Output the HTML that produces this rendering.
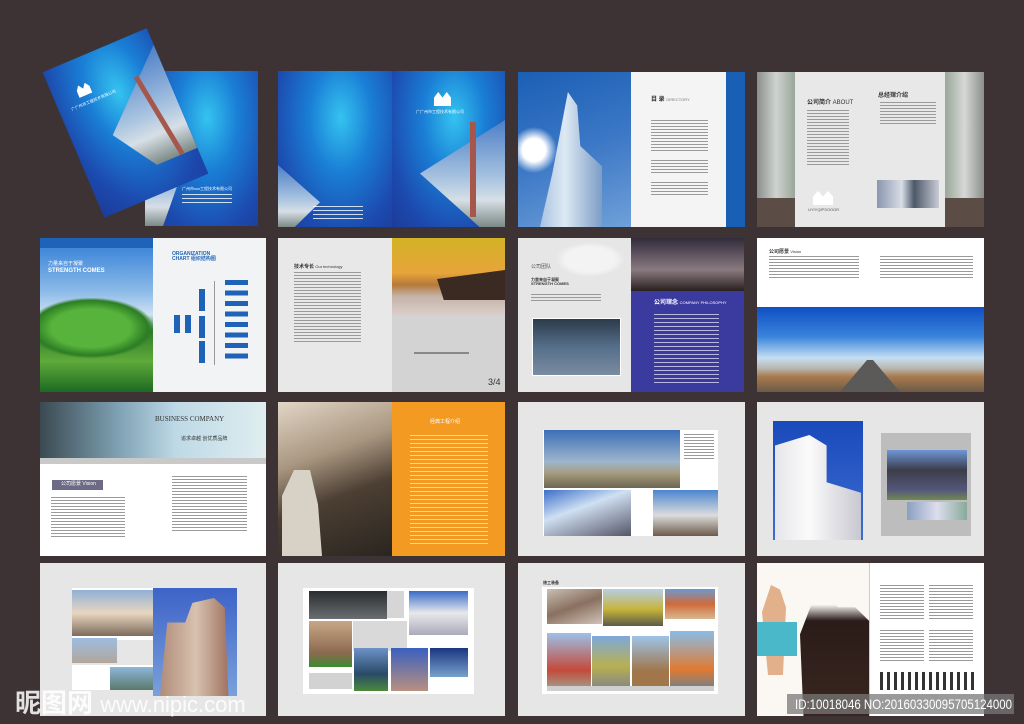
<!DOCTYPE html>
<html><head><meta charset="utf-8"><style>
*{margin:0;padding:0;box-sizing:border-box}
body{width:1024px;height:724px;background:#3d3334;position:relative;overflow:hidden;font-family:"Liberation Sans","Noto Sans CJK SC",sans-serif}
.a{position:absolute;overflow:hidden}
.blue{background:radial-gradient(ellipse at 55% 30%,#35c3f0 0%,#1a7fd6 35%,#1c4aae 75%,#1d3b9a 100%)}
.sky{background:linear-gradient(180deg,#4d7fc7 0%,#a9c4e0 55%,#d7dfe6 75%,#7c8a86 100%)}
.txt{background:repeating-linear-gradient(180deg,#9a9a9a 0 1px,transparent 1px 3px)}
.txtw{background:repeating-linear-gradient(180deg,rgba(255,255,255,.8) 0 1px,transparent 1px 4px)}
.t{position:absolute;white-space:nowrap;line-height:1}
</style></head><body>

<!-- ROW 1 A: cover -->
<div class="a blue" style="left:145px;top:71px;width:113px;height:155px"></div>
<div class="a sky" style="left:145px;top:150px;width:45px;height:76px;clip-path:polygon(0 10%,100% 0,40% 100%,0 100%)"></div>
<div class="t" style="left:182px;top:187px;font-size:4px;color:#fff">广州市xxx工程技术有限公司</div>
<div class="a txtw" style="left:182px;top:194px;width:50px;height:12px"></div>
<div class="a blue" style="left:69px;top:44px;width:113px;height:158px;transform:rotate(-23deg);overflow:hidden">
  <div class="a sky" style="left:40px;top:18px;width:73px;height:112px;clip-path:polygon(100% 0,100% 100%,40% 100%,0 60%);border:0"></div>
  <div class="a" style="left:88px;top:40px;width:5px;height:90px;background:#a4574a;transform:rotate(-8deg)"></div>
  <div class="a" style="left:24px;top:26px;width:14px;height:12px;background:#fff;clip-path:polygon(0 40%,25% 0,50% 40%,75% 0,100% 40%,100% 100%,0 100%)"></div>
  <div class="t" style="left:12px;top:44px;font-size:4px;color:#fff">广广州市工程技术有限公司</div>
</div>

<!-- ROW1 B -->
<div class="a blue" style="left:278px;top:71px;width:114px;height:156px"></div>
<div class="a sky" style="left:278px;top:165px;width:42px;height:62px;clip-path:polygon(0 0,100% 60%,40% 100%,0 100%)"></div>
<div class="a txtw" style="left:313px;top:206px;width:50px;height:13px"></div>
<div class="a blue" style="left:392px;top:71px;width:113px;height:156px"></div>
<div class="a sky" style="left:420px;top:120px;width:85px;height:107px;clip-path:polygon(100% 0,100% 100%,70% 100%,0 50%)"></div>
<div class="a" style="left:470px;top:122px;width:6px;height:95px;background:#a4574a"></div>
<div class="a" style="left:434px;top:92px;width:17px;height:14px;background:#fff;clip-path:polygon(0 40%,25% 0,50% 40%,75% 0,100% 40%,100% 100%,0 100%)"></div>
<div class="t" style="left:416px;top:110px;font-size:4px;color:#fff">广广州市工程技术有限公司</div>

<!-- ROW1 C -->
<div class="a" style="left:518px;top:72px;width:113px;height:155px;background:linear-gradient(160deg,#1b5fb4,#3b77c6 50%,#6fa0d8)"></div>
<div class="a" style="left:518px;top:120px;width:40px;height:60px;background:radial-gradient(circle at 40% 50%,#fff 0 30%,transparent 60%)"></div>
<div class="a" style="left:540px;top:92px;width:62px;height:135px;background:linear-gradient(90deg,#a9c3e0,#dde9f4 40%,#7d9dc5);clip-path:polygon(45% 0,60% 10%,65% 40%,100% 55%,100% 100%,0 100%,20% 60%)"></div>
<div class="a" style="left:631px;top:72px;width:95px;height:155px;background:#f4f4f4"></div>
<div class="a" style="left:726px;top:72px;width:19px;height:155px;background:#1a5fb6"></div>
<div class="t" style="left:651px;top:97px;font-size:6px;color:#333;font-weight:bold">目 录 <span style="font-weight:normal;font-size:4px;color:#777">DIRECTORY</span></div>
<div class="a txt" style="left:651px;top:120px;width:57px;height:32px"></div>
<div class="a txt" style="left:651px;top:160px;width:57px;height:14px"></div>
<div class="a txt" style="left:651px;top:182px;width:57px;height:14px"></div>

<!-- ROW1 D -->
<div class="a" style="left:757px;top:72px;width:227px;height:155px;background:#e8e8e8"></div>
<div class="a" style="left:757px;top:72px;width:38px;height:155px;background:linear-gradient(90deg,#8a8f8c,#cfd3d0 50%,#9aa79a)"></div>
<div class="a" style="left:945px;top:72px;width:39px;height:155px;background:linear-gradient(270deg,#8a8f8c,#d6d8d6 50%,#9aa79a)"></div>
<div class="a" style="left:757px;top:198px;width:38px;height:29px;background:#5b4d45"></div>
<div class="a" style="left:945px;top:198px;width:39px;height:29px;background:#5b4d45"></div>
<div class="t" style="left:807px;top:100px;font-size:6px;color:#333;font-weight:bold">公司简介 <span style="font-weight:normal">ABOUT</span></div>
<div class="a txt" style="left:807px;top:110px;width:42px;height:56px"></div>
<div class="a" style="left:813px;top:191px;width:20px;height:14px;background:#fff;clip-path:polygon(0 40%,25% 0,50% 40%,75% 0,100% 40%,100% 100%,0 100%)"></div>
<div class="t" style="left:808px;top:208px;font-size:4px;color:#555">UYIYQIPSOOGR</div>
<div class="t" style="left:878px;top:93px;font-size:6px;color:#333;font-weight:bold">总经理介绍</div>
<div class="a txt" style="left:880px;top:102px;width:56px;height:22px"></div>
<div class="a" style="left:877px;top:180px;width:62px;height:28px;background:linear-gradient(90deg,#8b96ad,#d8dde6 40%,#4c5868 60%,#c9ccd6)"></div>

<!-- ROW2 A -->
<div class="a" style="left:40px;top:238px;width:113px;height:154px;background:linear-gradient(180deg,#2d7bd6 0%,#8dbbe8 35%,#cfe2f2 50%,#2e7a2a 60%,#5faa3a 80%,#1c6a22 100%)"></div>
<div class="a" style="left:40px;top:298px;width:113px;height:60px;background:radial-gradient(ellipse at 45% 50%,#57b33b 0 45%,#2c7d24 65%,transparent 72%)"></div>
<div class="a" style="left:40px;top:238px;width:113px;height:10px;background:#1f63b8"></div>
<div class="t" style="left:48px;top:262px;font-size:5px;color:#fff">力量来自于凝聚</div>
<div class="t" style="left:48px;top:268px;font-size:6px;color:#fff;font-weight:bold">STRENGTH COMES</div>
<div class="a" style="left:153px;top:238px;width:113px;height:154px;background:#f2f3f5"></div>
<div class="t" style="left:172px;top:252px;font-size:5px;color:#1f63b8;font-weight:bold">ORGANIZATION<br>CHART 组织结构图</div>
<div class="a" style="left:174px;top:315px;width:6px;height:18px;background:#1f63b8"></div>
<div class="a" style="left:185px;top:315px;width:6px;height:18px;background:#1f63b8"></div>
<div class="a" style="left:199px;top:289px;width:6px;height:22px;background:#1f63b8"></div>
<div class="a" style="left:199px;top:316px;width:6px;height:22px;background:#1f63b8"></div>
<div class="a" style="left:199px;top:341px;width:6px;height:22px;background:#1f63b8"></div>
<div class="a" style="left:214px;top:281px;width:1px;height:84px;background:#999"></div>
<div class="a" style="left:225px;top:280px;width:23px;height:84px;background:repeating-linear-gradient(180deg,#1f63b8 0 5px,transparent 5px 10.5px)"></div>

<!-- ROW2 B -->
<div class="a" style="left:278px;top:238px;width:114px;height:154px;background:#e8e8e8"></div>
<div class="t" style="left:294px;top:265px;font-size:5px;color:#333;font-weight:bold">技术专长 <span style="font-weight:normal;font-size:4px">Our technology</span></div>
<div class="a txt" style="left:294px;top:272px;width:67px;height:72px"></div>
<div class="a" style="left:392px;top:238px;width:113px;height:78px;background:linear-gradient(180deg,#d3b326 0%,#e7a43a 45%,#b57a3a 60%,#c4b3a8 75%,#dcd0cc 100%)"></div>
<div class="a" style="left:437px;top:270px;width:68px;height:30px;background:#3a2a22;clip-path:polygon(0 30%,100% 0,100% 100%,10% 100%)"></div>
<div class="a" style="left:392px;top:316px;width:113px;height:76px;background:#d3d3d3"></div>
<div class="a" style="left:414px;top:352px;width:55px;height:2px;background:#888"></div>
<div class="t" style="left:488px;top:378px;font-size:9px;color:#333">3/4</div>

<!-- ROW2 C -->
<div class="a" style="left:518px;top:238px;width:113px;height:154px;background:#e6e6e6"></div>
<div class="a" style="left:555px;top:242px;width:70px;height:35px;background:radial-gradient(ellipse,#f3f3f3 0 50%,transparent 70%)"></div>
<div class="t" style="left:531px;top:265px;font-size:5px;color:#555">公司团队</div>
<div class="t" style="left:531px;top:278px;font-size:4px;color:#333;font-weight:bold">力量来自于凝聚<br>STRENGTH COMES</div>
<div class="a txt" style="left:531px;top:294px;width:70px;height:9px"></div>
<div class="a" style="left:532px;top:318px;width:89px;height:58px;background:linear-gradient(180deg,#2c3b4a,#556f8b 50%,#7a8ca0);border:1px solid #fff"></div>
<div class="a" style="left:631px;top:238px;width:113px;height:53px;background:linear-gradient(180deg,#312b3b,#8a7a80 60%,#2a2020)"></div>
<div class="a" style="left:631px;top:291px;width:113px;height:101px;background:#3b3a9e"></div>
<div class="t" style="left:654px;top:300px;font-size:6px;color:#fff;font-weight:bold">公司理念 <span style="font-weight:normal;font-size:4px">COMPANY PHILOSOPHY</span></div>
<div class="a txtw" style="left:654px;top:314px;width:65px;height:72px;opacity:.8"></div>

<!-- ROW2 D -->
<div class="a" style="left:757px;top:238px;width:227px;height:69px;background:#fff"></div>
<div class="t" style="left:769px;top:250px;font-size:5px;color:#333;font-weight:bold">公司愿景 <span style="font-weight:normal;font-size:4px">Vision</span></div>
<div class="a txt" style="left:769px;top:256px;width:90px;height:24px"></div>
<div class="a txt" style="left:880px;top:256px;width:93px;height:24px"></div>
<div class="a" style="left:757px;top:307px;width:227px;height:85px;background:linear-gradient(180deg,#0f4fc4 0%,#3a84dc 35%,#c6def2 60%,#b8b7b0 72%,#a87a4e 82%,#6b5a48 100%)"></div>
<div class="a" style="left:840px;top:360px;width:60px;height:32px;background:#5b5a58;clip-path:polygon(45% 0,55% 0,100% 100%,0 100%)"></div>

<!-- ROW3 A -->
<div class="a" style="left:40px;top:402px;width:226px;height:154px;background:#fff"></div>
<div class="a" style="left:40px;top:402px;width:226px;height:56px;background:linear-gradient(90deg,#3a4a52,#7fa2b4 35%,#bed9e6 60%,#dfeef0)"></div>
<div class="a" style="left:40px;top:458px;width:226px;height:6px;background:#c9c9c9"></div>
<div class="t" style="left:155px;top:416px;font-size:7px;color:#333;font-family:'Liberation Serif',serif">BUSINESS COMPANY</div>
<div class="t" style="left:181px;top:437px;font-size:5px;color:#333">追求卓越 创优质品牌</div>
<div class="a" style="left:52px;top:480px;width:51px;height:10px;background:#6c6a84"></div>
<div class="t" style="left:61px;top:482px;font-size:5px;color:#fff">公司愿景 Vision</div>
<div class="a txt" style="left:51px;top:497px;width:74px;height:40px"></div>
<div class="a txt" style="left:172px;top:476px;width:75px;height:55px"></div>

<!-- ROW3 B -->
<div class="a" style="left:278px;top:402px;width:114px;height:154px;background:linear-gradient(160deg,#e2d6c6 0%,#a89680 35%,#4c3f33 60%,#2a2520 100%)"></div>
<div class="a" style="left:282px;top:470px;width:40px;height:86px;background:#d8d2c6;clip-path:polygon(30% 0,70% 0,90% 40%,100% 100%,0 100%,0 30%)"></div>
<div class="a" style="left:392px;top:402px;width:113px;height:154px;background:#f39a23"></div>
<div class="t" style="left:430px;top:420px;font-size:5px;color:#fff">经典工程介绍</div>
<div class="a txtw" style="left:410px;top:435px;width:78px;height:110px;opacity:.75"></div>

<!-- ROW3 C -->
<div class="a" style="left:518px;top:402px;width:227px;height:154px;background:#e6e6e6"></div>
<div class="a" style="left:543px;top:430px;width:175px;height:106px;background:#fff"></div>
<div class="a" style="left:544px;top:430px;width:136px;height:58px;background:linear-gradient(180deg,#3c6fb8,#9fb6cc 55%,#a59a7c 75%,#6c6652)"></div>
<div class="a" style="left:544px;top:490px;width:87px;height:46px;background:linear-gradient(160deg,#3b6fca,#cfe0f2 40%,#556 100%)"></div>
<div class="a" style="left:653px;top:490px;width:65px;height:46px;background:linear-gradient(180deg,#4a86d0,#dcdcdc 55%,#6d5a4c)"></div>
<div class="a txt" style="left:684px;top:434px;width:30px;height:26px"></div>

<!-- ROW3 D -->
<div class="a" style="left:757px;top:402px;width:227px;height:154px;background:#e6e6e6"></div>
<div class="a" style="left:773px;top:421px;width:90px;height:119px;background:linear-gradient(180deg,#1a49bb,#3d6ed1)"></div>
<div class="a" style="left:775px;top:435px;width:86px;height:105px;background:linear-gradient(90deg,#e6e6ea,#fbfbfb 40%,#c8c8d0);clip-path:polygon(0 10%,40% 0,60% 10%,60% 45%,100% 55%,100% 100%,0 100%)"></div>
<div class="a" style="left:881px;top:433px;width:90px;height:103px;background:#bdbdbd"></div>
<div class="a" style="left:887px;top:450px;width:80px;height:50px;background:linear-gradient(180deg,#6f96d8,#3b3d4a 40%,#55577a 80%,#6f8a50)"></div>
<div class="a" style="left:907px;top:502px;width:60px;height:18px;background:linear-gradient(90deg,#8aa0c0,#dde,#8a9)"></div>

<!-- ROW4 A -->
<div class="a" style="left:40px;top:563px;width:226px;height:153px;background:#e6e6e6"></div>
<div class="a" style="left:72px;top:588px;width:81px;height:52px;background:#fff"></div>
<div class="a" style="left:72px;top:590px;width:81px;height:46px;background:linear-gradient(180deg,#8fb0d6,#e8d6c0 50%,#7d6c5c)"></div>
<div class="a" style="left:72px;top:638px;width:45px;height:25px;background:linear-gradient(180deg,#9dbde0,#b2a69a)"></div>
<div class="a" style="left:72px;top:665px;width:81px;height:25px;background:#fff"></div>
<div class="a" style="left:110px;top:667px;width:43px;height:23px;background:linear-gradient(180deg,#8eb6da,#5a7a6c)"></div>
<div class="a" style="left:153px;top:588px;width:84px;height:108px;background:linear-gradient(180deg,#3d63c8,#7aa0dc)"></div>
<div class="a" style="left:160px;top:598px;width:72px;height:98px;background:linear-gradient(90deg,#b08c78,#d8c2b0 50%,#9a6a58);clip-path:polygon(10% 25%,35% 25%,45% 5%,75% 0,90% 10%,95% 100%,0 100%)"></div>

<!-- ROW4 B -->
<div class="a" style="left:278px;top:563px;width:227px;height:153px;background:#e6e6e6"></div>
<div class="a" style="left:303px;top:588px;width:171px;height:106px;background:#fff"></div>
<div class="a" style="left:309px;top:591px;width:78px;height:28px;background:linear-gradient(180deg,#2b2d30,#6a6e70)"></div>
<div class="a" style="left:387px;top:591px;width:17px;height:27px;background:#d6d6d6"></div>
<div class="a" style="left:409px;top:591px;width:59px;height:44px;background:linear-gradient(180deg,#3a6cc8,#e8e8ea 50%,#aab)"></div>
<div class="a" style="left:309px;top:621px;width:43px;height:46px;background:linear-gradient(180deg,#c9a686,#8a6a50 70%,#3c8a30)"></div>
<div class="a" style="left:353px;top:621px;width:54px;height:30px;background:#d9d9d9"></div>
<div class="a" style="left:354px;top:648px;width:34px;height:43px;background:linear-gradient(180deg,#6c92c8,#2a4a68 60%,#4a8a3a)"></div>
<div class="a" style="left:391px;top:648px;width:37px;height:43px;background:linear-gradient(180deg,#3a60c0,#b89080)"></div>
<div class="a" style="left:430px;top:648px;width:38px;height:29px;background:linear-gradient(180deg,#1a3680,#7aa0cc)"></div>
<div class="a" style="left:309px;top:673px;width:43px;height:16px;background:#d2d2d2"></div>

<!-- ROW4 C -->
<div class="a" style="left:518px;top:563px;width:227px;height:153px;background:#e6e6e6"></div>
<div class="t" style="left:543px;top:581px;font-size:4px;color:#333;font-weight:bold">施工装备</div>
<div class="a" style="left:542px;top:587px;width:176px;height:107px;background:#fff"></div>
<div class="a" style="left:547px;top:589px;width:55px;height:35px;background:linear-gradient(160deg,#c8bfb2,#8a7060 50%,#d0c4b8)"></div>
<div class="a" style="left:603px;top:589px;width:60px;height:37px;background:linear-gradient(180deg,#b6cee6,#c7b43a 55%,#5a5a4a)"></div>
<div class="a" style="left:665px;top:589px;width:50px;height:30px;background:linear-gradient(180deg,#6a9ad0,#d06a3a 50%,#d8b890)"></div>
<div class="a" style="left:547px;top:633px;width:44px;height:53px;background:linear-gradient(180deg,#9cc0e8,#c44a3a 70%,#a89080)"></div>
<div class="a" style="left:592px;top:636px;width:38px;height:50px;background:linear-gradient(180deg,#7ea8dc,#b8b050 60%,#8a8a80)"></div>
<div class="a" style="left:632px;top:636px;width:37px;height:50px;background:linear-gradient(180deg,#9ec4e8,#a0764a 70%)"></div>
<div class="a" style="left:670px;top:631px;width:44px;height:55px;background:linear-gradient(180deg,#8abde8,#e07a30 70%,#808080)"></div>
<div class="a" style="left:547px;top:686px;width:167px;height:5px;background:#cfcfcf"></div>

<!-- ROW4 D -->
<div class="a" style="left:757px;top:563px;width:112px;height:153px;background:#fbf8f4"></div>
<div class="a" style="left:800px;top:580px;width:69px;height:136px;background:linear-gradient(180deg,transparent 0 18%,#2a1c18 30%,#3a2620 100%);clip-path:polygon(30% 0,55% 20%,80% 20%,100% 30%,100% 100%,5% 100%,0 40%)"></div>
<div class="a" style="left:759px;top:585px;width:30px;height:90px;background:#e2b08a;clip-path:polygon(40% 0,70% 5%,90% 25%,80% 100%,30% 100%,10% 30%)"></div>
<div class="a" style="left:757px;top:622px;width:40px;height:34px;background:#4ab8c8"></div>
<div class="a" style="left:869px;top:563px;width:115px;height:153px;background:#fff;border-left:1px solid #ccc"></div>
<div class="a txt" style="left:880px;top:585px;width:44px;height:36px"></div>
<div class="a txt" style="left:929px;top:585px;width:44px;height:36px"></div>
<div class="a txt" style="left:880px;top:630px;width:44px;height:33px"></div>
<div class="a txt" style="left:929px;top:630px;width:44px;height:33px"></div>
<div class="a" style="left:880px;top:672px;width:95px;height:18px;background:repeating-linear-gradient(90deg,#333 0 3px,transparent 3px 7px)"></div>

<!-- watermarks -->
<div class="t" style="left:15px;top:690px;font-size:26px;color:rgba(255,255,255,.85);font-weight:bold">昵图网 <span style="font-weight:normal;font-size:22px">www.nipic.com</span></div>
<div class="a" style="left:787px;top:694px;width:227px;height:20px;background:rgba(120,120,120,.75)"></div>
<div class="t" style="left:795px;top:697px;font-size:14px;color:#fff;transform:scaleX(0.82);transform-origin:left top">ID:10018046 NO:20160330095705124000</div>
</body></html>
